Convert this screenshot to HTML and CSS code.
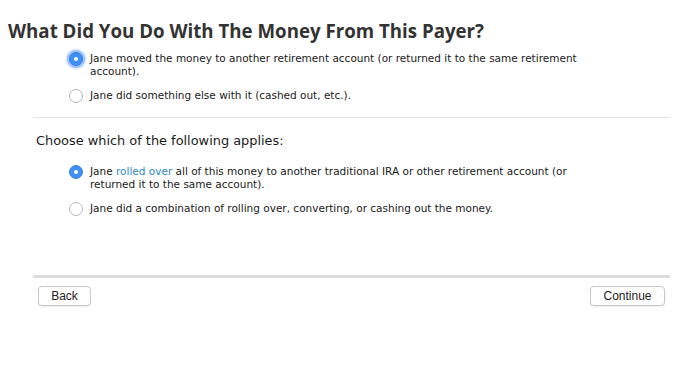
FILE: index.html
```html
<!DOCTYPE html>
<html>
<head>
<meta charset="utf-8">
<link rel="stylesheet" href="styles.css">
</head>
<body>
<h1 class="title">What Did You Do With The Money From This Payer?</h1>
<div class="content">
  <div class="group first">
    <label class="opt">
      <span class="radio on focus"></span>
      <span class="txt">Jane moved the money to another retirement account (or returned it to the same retirement account).</span>
    </label>
    <label class="opt">
      <span class="radio"></span>
      <span class="txt">Jane did something else with it (cashed out, etc.).</span>
    </label>
  </div>
  <div class="divider"></div>
  <p class="question">Choose which of the following applies:</p>
  <div class="group">
    <label class="opt">
      <span class="radio on"></span>
      <span class="txt">Jane <span class="link">rolled over</span> all of this money to another traditional IRA or other retirement account (or returned it to the same account).</span>
    </label>
    <label class="opt">
      <span class="radio"></span>
      <span class="txt">Jane did a combination of rolling over, converting, or cashing out the money.</span>
    </label>
  </div>
  <div class="footer-line"></div>
  <div class="buttons">
    <button class="btn back">Back</button>
    <button class="btn cont">Continue</button>
  </div>
</div>
</body>
</html>
```
FILE: styles.css
```css
html, body {
  margin: 0;
  padding: 0;
  background: #fff;
}
body {
  width: 675px;
  height: 390px;
  font-family: "DejaVu Sans", sans-serif;
  color: #222;
}
.title {
  margin: 0;
  padding: 19px 0 0 8px;
  font-family: "Open Sans", "DejaVu Sans", sans-serif;
  font-weight: 700;
  font-size: 18.7px;
  line-height: 24px;
  color: #333;
}
.content {
  margin-left: 33px;
  width: 637px;
}
.group {
  padding-left: 36px;
  display: flex;
  flex-direction: column;
  gap: 11px;
}
.group.first {
  padding-top: 9px;
}
.opt {
  display: flex;
  align-items: flex-start;
  width: 520px;
}
.radio {
  flex: none;
  width: 12px;
  height: 12px;
  border-radius: 50%;
  border: 1px solid #b5b5b5;
  background: #fff;
  margin-top: 0;
  margin-right: 7px;
  box-sizing: content-box;
  position: relative;
}
.radio.on {
  background: #3d8ef5;
  border-color: #3a83e8;
}
.radio.on::after {
  content: "";
  position: absolute;
  left: 4px;
  top: 4px;
  width: 4px;
  height: 4px;
  border-radius: 50%;
  background: #fff;
}
.radio.focus {
  box-shadow: 0 0 0 2px #9cc2f8, 0 0 2px 3px #c6dbfb;
}
.txt {
  font-size: 10.5px;
  line-height: 13px;
  color: #1a1a1a;
}
.link {
  color: #2e8bbf;
}
.divider {
  margin-top: 14px;
  height: 1px;
  background: #e0e0e0;
}
.question {
  margin: 15px 0 0 3px;
  font-size: 12.9px;
  line-height: 16px;
  color: #1a1a1a;
}
.question + .group {
  padding-top: 16px;
}
.footer-line {
  margin-top: 59px;
  height: 3px;
  background: #dcdcdc;
}
.buttons {
  display: flex;
  justify-content: space-between;
  padding: 8px 5px 0 5px;
}
.btn {
  font-family: "Liberation Sans", Arial, sans-serif;
  font-size: 12px;
  color: #222;
  background: #fff;
  border: 1px solid #c8c8c8;
  border-radius: 4px;
  height: 20px;
  padding: 0 10px;
  line-height: 18px;
  box-shadow: 0 1px 1px rgba(0,0,0,0.08);
}
.btn.back {
  width: 53px;
}
.btn.cont {
  width: 75px;
}
```
